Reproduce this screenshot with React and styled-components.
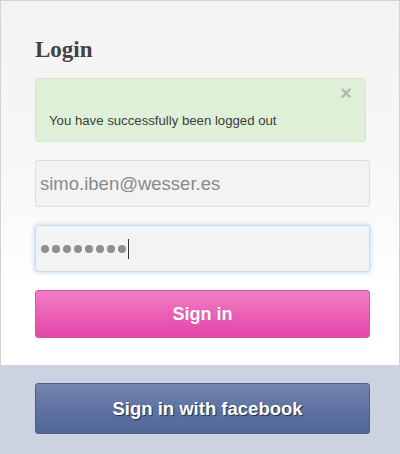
import React from "react";
import styled, { createGlobalStyle } from "styled-components";

const GlobalStyle = createGlobalStyle`
  html, body {
    margin: 0;
    padding: 0;
    background: #ffffff;
  }
  body {
    font-family: "Liberation Sans", Arial, sans-serif;
  }
`;

const Card = styled.div`
  width: 400px;
  height: 454px;
  box-sizing: border-box;
  border: 1px solid #d3d3d3;
  border-bottom: none;
  display: flex;
  flex-direction: column;
  overflow: hidden;
`;

const Main = styled.div`
  flex: 0 0 auto;
  height: 364px;
  box-sizing: border-box;
  padding: 38px 29px 0 34px;
  background: linear-gradient(to bottom, #f3f3f3 0%, #f7f7f7 45%, #ffffff 80%);
  display: flex;
  flex-direction: column;
`;

const Title = styled.h2`
  margin: 0 0 17px;
  font-family: "Liberation Serif", "Times New Roman", serif;
  font-weight: bold;
  font-size: 23px;
  line-height: 22px;
  color: #424242;
`;

const Alert = styled.div`
  position: relative;
  margin: 0 4px 18px 0;
  padding: 34px 14px 13px 13px;
  background: #dff0d8;
  border: 1px solid #d3e8c8;
  border-radius: 3px;
  color: #3d3d3d;
  font-size: 13.2px;
  line-height: 15px;
`;

const Close = styled.span`
  position: absolute;
  top: 4px;
  right: 13px;
  font-size: 20px;
  font-weight: bold;
  line-height: 20px;
  color: #b4b8b2;
`;

const Field = styled.div`
  height: 47px;
  box-sizing: border-box;
  margin-bottom: 18px;
  padding: 0 4px;
  display: flex;
  align-items: center;
  background: #f3f3f3;
  border: 1px solid ${(p) => (p.focused ? "#c6dcef" : "#dedede")};
  border-radius: 3px;
  box-shadow: ${(p) =>
    p.focused ? "0 0 5px rgba(110, 175, 230, 0.55)" : "none"};
  font-size: 18.5px;
  color: #8a8a8a;
`;

const Dot = styled.span`
  width: 8px;
  height: 8px;
  margin: 0 3px 0 1px;
  border-radius: 50%;
  background: #8e8e8e;
  &:not(:first-child) {
    margin-left: 0;
  }
`;

const Caret = styled.span`
  width: 1px;
  height: 20px;
  margin-left: -1px;
  background: #333;
`;

const Button = styled.button`
  width: 100%;
  height: ${(p) => (p.fb ? "51px" : "48px")};
  box-sizing: border-box;
  padding: ${(p) => (p.fb ? "0 0 0 10px" : "0")};
  border-radius: 3px;
  font-family: "Liberation Sans", Arial, sans-serif;
  font-size: ${(p) => (p.fb ? "18.5px" : "18px")};
  font-weight: bold;
  color: #ffffff;
  cursor: pointer;
  border: 1px solid ${(p) => (p.fb ? "#4c5f8c" : "#dd50aa")};
  background: ${(p) =>
    p.fb
      ? "linear-gradient(to bottom, #7485ad 0%, #5d71a0 55%, #50669a 100%)"
      : "linear-gradient(to bottom, #f17dc5 0%, #ea5eb4 55%, #e445a8 100%)"};
  text-shadow: ${(p) =>
    p.fb ? "1px 1px 1px rgba(20, 30, 60, 0.85)" : "0 0 1px rgba(180, 40, 120, 0.3)"};
`;

const Footer = styled.div`
  flex: 1;
  padding: 18px 29px 0 34px;
  background: #cbd2e0;
`;

const App = () => {
  return (
    <>
      <GlobalStyle />
      <Card>
        <Main>
          <Title>Login</Title>
          <Alert>
            <Close>×</Close>
            You have successfully been logged out
          </Alert>
          <Field>simo.iben@wesser.es</Field>
          <Field focused>
            {Array.from({ length: 8 }).map((_, i) => (
              <Dot key={i} />
            ))}
            <Caret />
          </Field>
          <Button>Sign in</Button>
        </Main>
        <Footer>
          <Button fb>Sign in with facebook</Button>
        </Footer>
      </Card>
    </>
  );
};

export default App;
